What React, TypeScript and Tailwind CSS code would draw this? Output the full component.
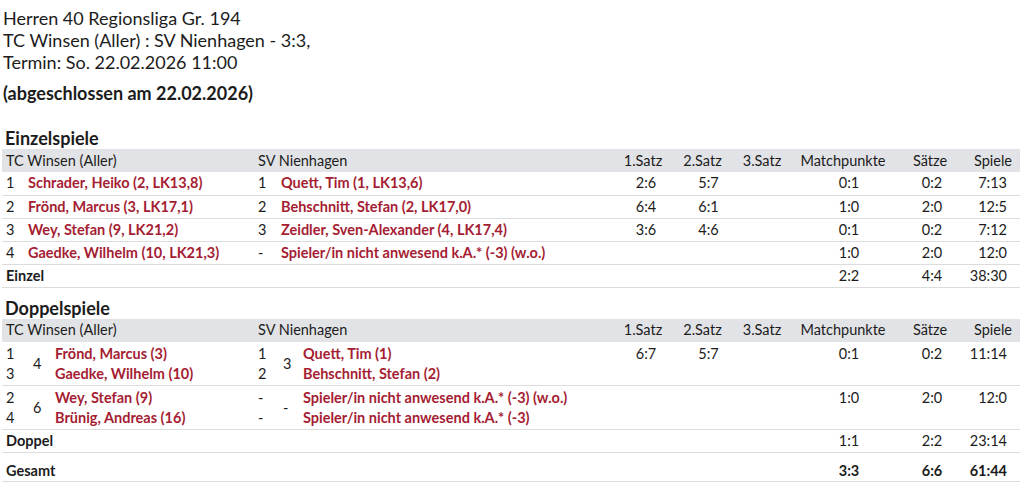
import React from "react";

type Single = {
  n1: string;
  p1: string;
  n2: string;
  p2: string;
  s1?: string;
  s2?: string;
  mp: string;
  sets: string;
  games: string;
};

type Double = {
  n1: [string, string];
  sum1: string;
  p1: [string, string];
  n2: [string, string];
  sum2: string;
  p2: [string, string];
  s1?: string;
  s2?: string;
  mp: string;
  sets: string;
  games: string;
};

const singles: Single[] = [
  { n1: "1", p1: "Schrader, Heiko (2, LK13,8)", n2: "1", p2: "Quett, Tim (1, LK13,6)", s1: "2:6", s2: "5:7", mp: "0:1", sets: "0:2", games: "7:13" },
  { n1: "2", p1: "Frönd, Marcus (3, LK17,1)", n2: "2", p2: "Behschnitt, Stefan (2, LK17,0)", s1: "6:4", s2: "6:1", mp: "1:0", sets: "2:0", games: "12:5" },
  { n1: "3", p1: "Wey, Stefan (9, LK21,2)", n2: "3", p2: "Zeidler, Sven-Alexander (4, LK17,4)", s1: "3:6", s2: "4:6", mp: "0:1", sets: "0:2", games: "7:12" },
  { n1: "4", p1: "Gaedke, Wilhelm (10, LK21,3)", n2: "-", p2: "Spieler/in nicht anwesend k.A.* (-3) (w.o.)", mp: "1:0", sets: "2:0", games: "12:0" },
];

const doubles: Double[] = [
  {
    n1: ["1", "3"], sum1: "4", p1: ["Frönd, Marcus (3)", "Gaedke, Wilhelm (10)"],
    n2: ["1", "2"], sum2: "3", p2: ["Quett, Tim (1)", "Behschnitt, Stefan (2)"],
    s1: "6:7", s2: "5:7", mp: "0:1", sets: "0:2", games: "11:14",
  },
  {
    n1: ["2", "4"], sum1: "6", p1: ["Wey, Stefan (9)", "Brünig, Andreas (16)"],
    n2: ["-", "-"], sum2: "-", p2: ["Spieler/in nicht anwesend k.A.* (-3) (w.o.)", "Spieler/in nicht anwesend k.A.* (-3)"],
    mp: "1:0", sets: "2:0", games: "12:0",
  },
];

const red = "text-[#a51d33] font-bold";

const Cols = () => (
  <colgroup>
    <col className="w-[20px]" />
    <col className="w-[231px]" />
    <col className="w-[22px]" />
    <col className="w-[338px]" />
    <col className="w-[60px]" />
    <col className="w-[59px]" />
    <col className="w-[60px]" />
    <col className="w-[102px]" />
    <col className="w-[72px]" />
    <col />
  </colgroup>
);

const HeadRow = () => (
  <tr className="bg-[#e2e3e7] h-[23px]">
    <td colSpan={2} className="pl-[4px]">TC Winsen (Aller)</td>
    <td colSpan={2} className="pl-[5px]">SV Nienhagen</td>
    <td className="text-center">1.Satz</td>
    <td className="text-center">2.Satz</td>
    <td className="text-center">3.Satz</td>
    <td className="text-center">Matchpunkte</td>
    <td className="text-center">Sätze</td>
    <td className="text-center">Spiele</td>
  </tr>
);

const Scores = ({ s1, s2, mp, sets, games }: { s1?: string; s2?: string; mp: string; sets: string; games: string }) => (
  <>
    <td className="text-center pl-[6px]">{s1}</td>
    <td className="text-center pl-[12px]">{s2}</td>
    <td />
    <td className="text-center pl-[12px]">{mp}</td>
    <td className="text-center pl-[4px]">{sets}</td>
    <td className="text-right pr-[13px]">{games}</td>
  </>
);

const SumRow = ({ label, mp, sets, games, bold, tall }: { label: string; mp: string; sets: string; games: string; bold?: boolean; tall?: boolean }) => (
  <tr className={`border-b border-[#dcdcdc] ${tall ? "h-[29px]" : "h-[23px]"}`}>
    <td colSpan={4} className={`pl-[4px] font-bold ${tall ? "pt-[8px]" : ""}`}>{label}</td>
    <td colSpan={3} />
    <td className={`text-center pl-[12px] ${bold ? "font-bold" : ""} ${tall ? "pt-[8px]" : ""}`}>{mp}</td>
    <td className={`text-center pl-[4px] ${bold ? "font-bold" : ""} ${tall ? "pt-[8px]" : ""}`}>{sets}</td>
    <td className={`text-right pr-[13px] ${bold ? "font-bold" : ""} ${tall ? "pt-[8px]" : ""}`}>{games}</td>
  </tr>
);

export default function App() {
  return (
    <div
      className="w-[1020px] h-[492px] bg-white text-[#1c1c1c] overflow-hidden"
      style={{ fontFamily: "Lato, 'Noto Sans', sans-serif" }}
    >
      <div className="pl-[3px] pt-[7px] text-[18px] leading-[22px]">
        <div>Herren 40 Regionsliga Gr. 194</div>
        <div>TC Winsen (Aller) : SV Nienhagen - 3:3,</div>
        <div>Termin: So. 22.02.2026 11:00</div>
        <div className="mt-[9px] font-bold">(abgeschlossen am 22.02.2026)</div>
      </div>

      <div className="pl-[5px] mt-[23px] text-[18px] leading-[22px] font-bold">Einzelspiele</div>
      <div className="pl-[2px]">
        <table className="w-[1018px] table-fixed border-collapse text-[14.5px] leading-[20px]">
          <Cols />
          <tbody>
            <HeadRow />
            {singles.map((s) => (
              <tr key={s.p1} className="border-b border-[#dcdcdc] h-[23px]">
                <td className="pl-[4px]">{s.n1}</td>
                <td className={`pl-[6px] ${red}`}>{s.p1}</td>
                <td className="pl-[5px]">{s.n2}</td>
                <td className={`pl-[6px] ${red}`}>{s.p2}</td>
                <Scores {...s} />
              </tr>
            ))}
            <SumRow label="Einzel" mp="2:2" sets="4:4" games="38:30" />
          </tbody>
        </table>
      </div>

      <div className="pl-[5px] mt-[9px] text-[18px] leading-[22px] font-bold">Doppelspiele</div>
      <div className="pl-[2px]">
        <table className="w-[1018px] table-fixed border-collapse text-[14.5px] leading-[20px]">
          <Cols />
          <tbody>
            <HeadRow />
            {doubles.map((d) => (
              <tr key={d.p1[0]} className="border-b border-[#dcdcdc] align-top">
                <td className="pl-[4px] pt-[2px] pb-[1px]">
                  <div>{d.n1[0]}</div>
                  <div>{d.n1[1]}</div>
                </td>
                <td className="pt-[2px] pb-[1px]">
                  <div className="flex items-center">
                    <div className="w-[33px] pl-[11px]">{d.sum1}</div>
                    <div className={red}>
                      <div>{d.p1[0]}</div>
                      <div>{d.p1[1]}</div>
                    </div>
                  </div>
                </td>
                <td className="pl-[5px] pt-[2px] pb-[1px]">
                  <div>{d.n2[0]}</div>
                  <div>{d.n2[1]}</div>
                </td>
                <td className="pt-[2px] pb-[1px]">
                  <div className="flex items-center">
                    <div className="w-[28px] pl-[8px]">{d.sum2}</div>
                    <div className={red}>
                      <div>{d.p2[0]}</div>
                      <div>{d.p2[1]}</div>
                    </div>
                  </div>
                </td>
                <td className="text-center pl-[6px] pt-[2px]">{d.s1}</td>
                <td className="text-center pl-[12px] pt-[2px]">{d.s2}</td>
                <td />
                <td className="text-center pl-[12px] pt-[2px]">{d.mp}</td>
                <td className="text-center pl-[4px] pt-[2px]">{d.sets}</td>
                <td className="text-right pr-[13px] pt-[2px]">{d.games}</td>
              </tr>
            ))}
            <SumRow label="Doppel" mp="1:1" sets="2:2" games="23:14" />
            <SumRow label="Gesamt" mp="3:3" sets="6:6" games="61:44" bold tall />
          </tbody>
        </table>
      </div>
    </div>
  );
}
